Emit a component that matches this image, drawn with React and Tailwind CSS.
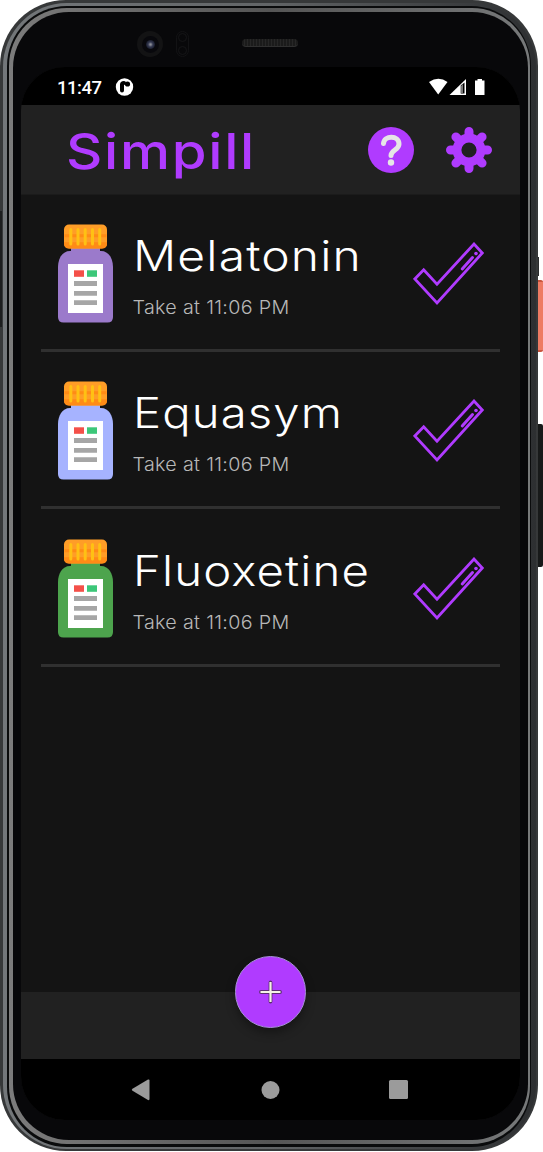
import React from "react";

const PILLS = [
  { name: "Melatonin", color: "#9b7acb", width: 229 },
  { name: "Equasym", color: "#a6b3ff", width: 210 },
  { name: "Fluoxetine", color: "#4da44d", width: 237 },
];

function Bottle({ color }) {
  return (
    <svg className="h-[99px] w-[55px] shrink-0" viewBox="0 0 55 99">
      <rect x="13" y="22" width="29" height="8" fill={color} />
      <path d="M12 27H43C51 27 55 35 55 43V93Q55 98.500 49.500 98.500H5.500Q0 98.500 0 93V43C0 35 4 27 12 27Z" fill={color} />
      <rect x="6" y="0.500" width="43" height="24" rx="5" fill="#ff9d27" />
      <path d="M6.500 10.300H48.500V13.300H6.500ZM6 18.300H49V19.500Q49 24.500 44 24.500H11Q6 24.500 6 19.500Z" fill="#ff8b16" />
      <path d="M12.800 5.500V20M20 5.500V20M27.200 5.500V20M34.500 5.500V20M41.700 5.500V20" stroke="#ffc113" strokeWidth="3" strokeLinecap="round" />
      <rect x="10" y="40" width="35" height="49" fill="#fff" />
      <rect x="16" y="46.300" width="10" height="6.500" fill="#f45049" />
      <rect x="29" y="46.300" width="10" height="6.500" fill="#3cc779" />
      <path d="M16 59.500H39M16 69.300H39M16 78.700H39" stroke="#a6a6a6" strokeWidth="4.800" />
    </svg>
  );
}

function Check() {
  return (
    <svg className="h-[64px] w-[72px]" viewBox="0 0 72 64" fill="none" stroke="#b03bff" strokeWidth="2.800">
      <path d="M1.800 37L10.700 27.700L24 42.100L61 2L69.300 11L24 61Z" />
      <path d="M49.200 27L59.500 15.500" strokeWidth="3" strokeLinecap="round" />
      <circle cx="63" cy="11.500" r="1.800" fill="#b03bff" stroke="none" />
    </svg>
  );
}

function PillRow({ pill }) {
  return (
    <div className="ml-5 mr-[20px] flex h-[157.500px] border-b-[3px] border-[#303030] pl-[17px] pt-[29.500px]">
      <Bottle color={pill.color} />
      <div className="ml-[20px] w-[280px] pt-[1px]">
        <svg className="block h-[62px] w-[270px] overflow-visible" fontFamily="Inter, sans-serif">
          <text x="0" y="46" fontSize="42" fontWeight="300" letterSpacing="1" fill="#fff" textLength={pill.width} lengthAdjust="spacingAndGlyphs">{pill.name}</text>
        </svg>
        <svg className="block h-[30px] w-[200px] overflow-visible" fontFamily="Inter, sans-serif">
          <text x="-0.500" y="27" fontSize="18.500" fontWeight="300" letterSpacing="0.300" fill="#b8b8b8" textLength="157" lengthAdjust="spacingAndGlyphs">Take at 11:06 PM</text>
        </svg>
      </div>
      <div className="pt-[18px]"><Check /></div>
    </div>
  );
}

function Gear() {
  return (
    <svg className="h-[46px] w-[46px]" viewBox="-23 -23 46 46">
      <circle r="12" fill="none" stroke="#b03bff" strokeWidth="8.800" />
      {[0, 45, 90, 135].map((a) => (
        <g key={a} transform={`rotate(${a})`} stroke="#b03bff" strokeWidth="9" strokeLinecap="round">
          <path d="M0-18.500V-14M0 18.500V14" />
        </g>
      ))}
    </svg>
  );
}

export default function App() {
  return (
    <div className="relative h-[1152px] w-[543px] overflow-hidden bg-white">
      <div className="absolute left-[535px] top-[257px] h-[19px] w-[4px] bg-[#2b2c2d]" />
      <div className="absolute left-[532px] top-[280px] h-[72px] w-[11px] rounded-r-[2px] border-y-2 border-[#c9553e] bg-[#ee7b63]" />
      <div className="absolute left-[532px] top-[424px] h-[143px] w-[11px] rounded-r-[2px] bg-[#171919]" />
      <div className="relative h-[1151px] w-[538px] rounded-[66px] bg-[#363839] pb-[2px] pl-[3px] pr-[2px] pt-[3px]">
        <div className="absolute left-0 top-[211px] h-[116px] w-[2px] bg-[#1c1d1e]" />
        <div className="relative h-full rounded-[64px] bg-gradient-to-r from-[#73777a] from-0% via-[#626567] via-50% to-[#2d2f31] pb-[2px] pl-[4px] pr-[5px] pt-[3px]">
          <div className="h-full rounded-[60px] bg-[#0a0b0c] pb-[3px] pl-[2px] pr-[1px] pt-[2px]">
            <div className="h-full rounded-[58px] bg-gradient-to-r from-[#7c7c7c] from-0% via-[#555] via-50% to-[#77797a] pb-[4px] pl-[4px] pr-[2px] pt-[4px]">
              <div className="flex h-full flex-col rounded-[56px] bg-[#08080a] pl-[8px] pt-[55px]">
                <Screen />
              </div>
            </div>
          </div>
        </div>
      </div>
      <div className="absolute left-[137px] top-[31px] flex h-[26px] w-[26px] items-center justify-center rounded-full bg-[#131314]">
        <div className="flex h-[17px] w-[17px] items-center justify-center rounded-full bg-[#08080c]">
          <div className="h-[9px] w-[9px] rounded-full bg-[radial-gradient(circle,#8b8d96_8%,#333850_38%,#111420_80%)]" />
        </div>
      </div>
      <div className="absolute left-[176px] top-[31px] flex h-[26px] w-[13px] flex-col items-center justify-between rounded-full border border-[#121214] py-[1px]">
        <div className="h-[9px] w-[9px] rounded-full border border-[#151517]" />
        <div className="h-[9px] w-[9px] rounded-full border border-[#151517]" />
      </div>
      <div className="absolute left-[242px] top-[39px] h-[8px] w-[56px] rounded-full border-b border-[#303030] bg-[repeating-linear-gradient(90deg,#1b1b1b_0px,#1b1b1b_2px,#272727_2px,#272727_3px)]" />
    </div>
  );
}

function Screen() {
  return (
    <div className="relative flex h-[1053px] w-[499px] flex-col overflow-hidden rounded-[44px] bg-[#141414]">
      <div className="flex h-[38px] shrink-0 items-center bg-black pl-[36px]">
        <svg className="h-[38px] w-[80px]" fontFamily="Roboto, sans-serif">
          <text x="0" y="27" fontSize="18.500" fontWeight="500" fill="#fff" textLength="45">11:47</text>
          <circle cx="67.500" cy="20" r="8.700" fill="#fff" />
          <path d="M65 17.500V23.500M65 17.500Q65 16 67 16" fill="none" stroke="#000" strokeWidth="4" strokeLinecap="round" />
          <circle cx="70.500" cy="17" r="2.600" fill="#000" />
        </svg>
        <svg className="ml-[292px] h-[38px] w-[58px]" viewBox="0 0 58 38" fill="#fff">
          <path d="M0 15Q9.500 8.500 18.500 15L9.200 27.500Z" />
          <path d="M20.500 28L37 12V28Z" />
          <path d="M31.700 18.500V26.500H35.500V15.500" fill="#000" />
          <path d="M34 17V27H32V19Z" fill="#777" />
          <path d="M46 13.500H48.500V12H53V13.500H55.500V28H46Z" />
        </svg>
      </div>
      <div className="flex h-[90px] shrink-0 items-center border-b border-[#1b1b1b] bg-[#212121] pl-[46px]">
        <svg className="h-[88px] w-[210px]" fontFamily="Inter, sans-serif">
          <text x="-1" y="62.500" fontSize="49" fontWeight="500" letterSpacing="1.500" fill="#b03bff" textLength="190" lengthAdjust="spacingAndGlyphs">Simpill</text>
        </svg>
        <svg className="ml-[91px] h-[46px] w-[46px]" viewBox="0 0 46 46">
          <circle cx="23" cy="23" r="23" fill="#b03bff" />
          <path d="M15.500 16.500C16 8 31 8 31 17C31 23 23 23 23 28.500" fill="none" stroke="#e6e6e6" strokeWidth="5" strokeLinecap="round" />
          <circle cx="23" cy="35.500" r="3.200" fill="#e6e6e6" />
        </svg>
        <div className="ml-[32px]"><Gear /></div>
      </div>
      <div className="-mt-[0.600px] h-[797.600px] shrink-0">
        {PILLS.map((p) => <PillRow key={p.name} pill={p} />)}
      </div>
      <div className="h-[67px] shrink-0 bg-[#212121]" />
      <div className="h-[61px] shrink-0 bg-black">
        <svg className="h-[61px] w-[499px]" fill="#9b9b9b">
          <path d="M111.500 29.800Q110 30.800 111.500 31.800L127 41Q128.500 41.500 128.500 40V21.500Q128.500 20 127 20.500Z" />
          <circle cx="249.500" cy="31" r="9" />
          <rect x="368" y="21" width="19" height="19" rx="1.500" />
        </svg>
      </div>
      <button aria-label="Add" className="absolute left-[214px] top-[889px] flex h-[72px] w-[71px] items-center justify-center rounded-full border border-[#a68fd6] bg-[#b03bff] shadow-[0_5px_10px_rgba(0,0,0,0.35)]">
        <svg className="h-[24px] w-[24px]" viewBox="0 0 24 24">
          <path d="M11.500 2.500V21.500M2 12H21" stroke="#5a3070" strokeWidth="3.800" strokeLinecap="round" />
          <path d="M11.500 2V22M1.500 12H21.500" stroke="#f5f2e7" strokeWidth="2.200" />
        </svg>
      </button>
    </div>
  );
}
